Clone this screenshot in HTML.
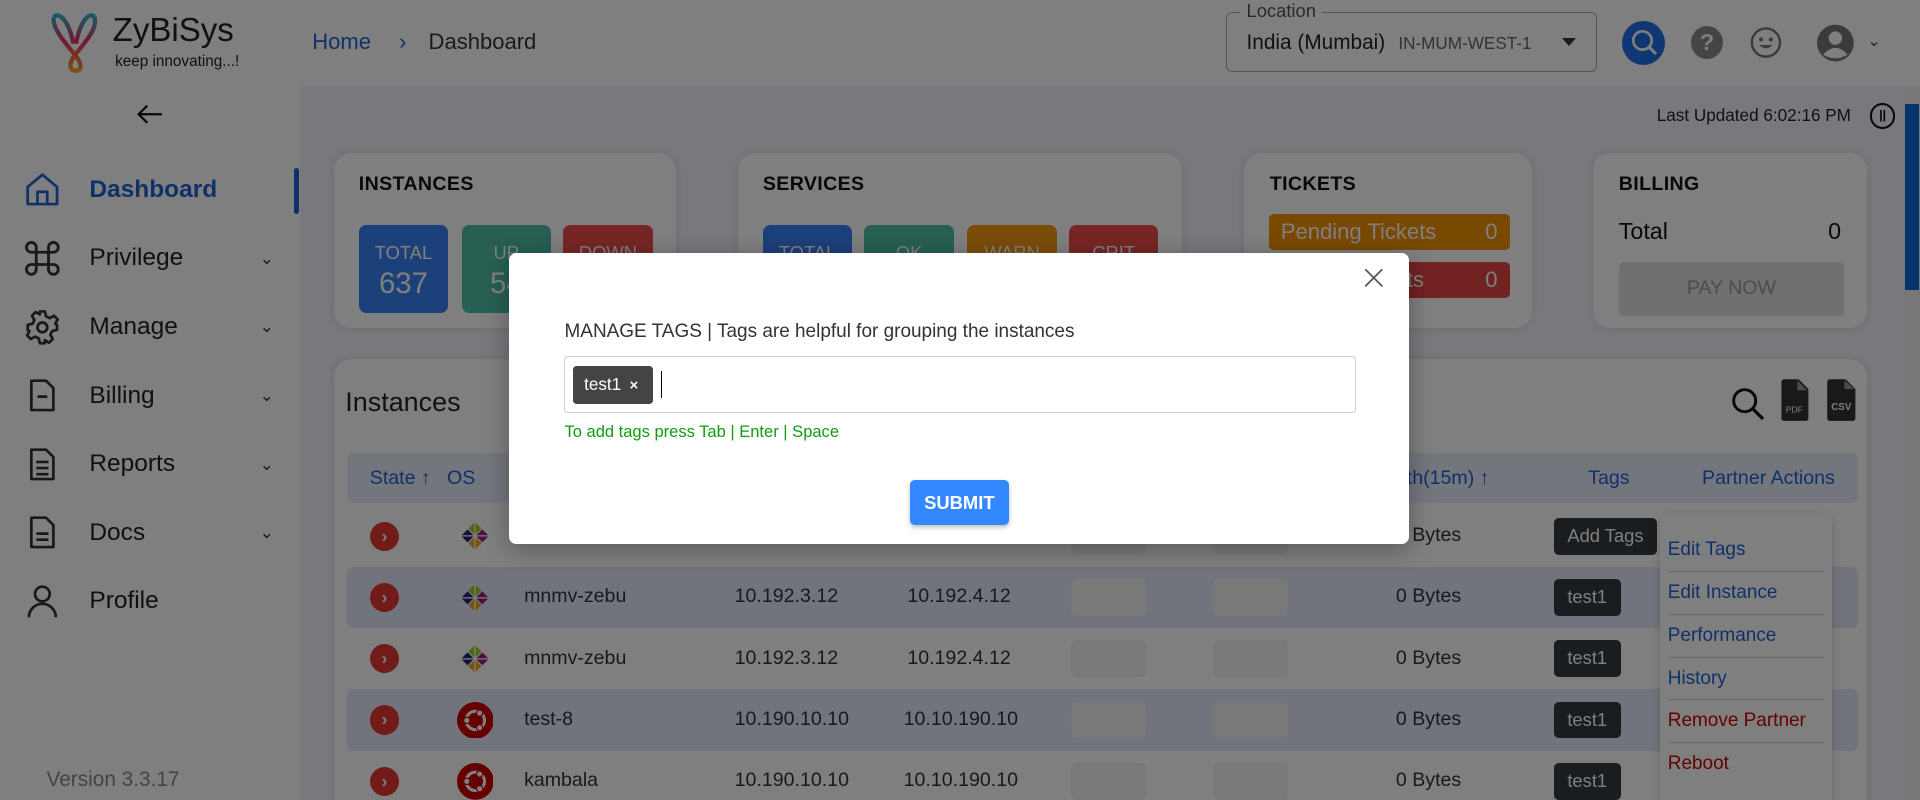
<!DOCTYPE html>
<html><head><meta charset="utf-8"><style>
*{box-sizing:border-box;margin:0;padding:0}
html,body{width:1920px;height:800px;overflow:hidden}
body{font-family:"Liberation Sans",sans-serif;background:#fff}
#root{zoom:1.22449;width:1568px;height:653.3px;position:relative;overflow:hidden;background:#fff}
.a{position:absolute}
.main{left:245px;top:70px;width:1323px;height:600px;background:#eef2f8}
.card{background:#fff;border-radius:14px;box-shadow:0 0 6px rgba(120,140,180,.25)}
.ct{font-size:16px;font-weight:bold;color:#111;letter-spacing:.3px}
.box{width:73px;height:72px;border-radius:6px;color:#fff;text-align:center}
.box b{display:block;font-size:15px;margin-top:14px;font-weight:normal}
.box i{display:block;font-style:normal;font-size:24px;margin-top:2px}
.mi{left:20px;font-size:20px;color:#222;display:flex;align-items:center}
.mi svg{width:30px;height:30px;margin-right:23px}
.chev{position:absolute;left:192px;font-size:14px;color:#333}
.row{left:283px;width:1234px;height:50px}
.rc{position:absolute;left:19px;top:13px;width:24px;height:24px;border-radius:50%;background:#e53935;color:#fff;font-size:14px;text-align:center;line-height:24px;font-weight:bold}
.t{position:absolute;top:15px;font-size:16px;color:#333}
.ph{position:absolute;top:10px;width:61px;height:30px;border-radius:5px;background:#f2f2f2}
.tag{position:absolute;left:986px;top:10px;height:30px;padding:0 11px;border-radius:4px;background:#343a40;color:#fff;font-size:15px;line-height:30px}
.dd{font-size:15.5px;padding:0 0;height:35px;line-height:35px;border-bottom:1px solid #ccc}
.os{position:absolute;left:92px;top:12px}
</style></head><body><div id="root">
<svg width="0" height="0" style="position:absolute"><defs>
<symbol id="cent" viewBox="0 0 26 26"><g transform="rotate(45 13 13)"><rect x="5" y="5" width="7.5" height="7.5" fill="#9ccd2a"/><rect x="13.5" y="5" width="7.5" height="7.5" fill="#932279"/><rect x="5" y="13.5" width="7.5" height="7.5" fill="#262577"/><rect x="13.5" y="13.5" width="7.5" height="7.5" fill="#efa724"/></g><path d="M13 1v24M1 13h24" stroke="#fff" stroke-width="1"/></symbol>
<symbol id="ubu" viewBox="0 0 30 30"><circle cx="15" cy="15" r="15" fill="#c00"/><circle cx="15" cy="15" r="7.5" fill="none" stroke="#fff" stroke-width="2.5"/><circle cx="8" cy="15" r="2.6" fill="#fff" stroke="#c00"/><circle cx="18.5" cy="9" r="2.6" fill="#fff" stroke="#c00"/><circle cx="18.5" cy="21" r="2.6" fill="#fff" stroke="#c00"/></symbol>
</defs></svg>
<!-- header -->
<div class="a" style="left:40px;top:10px">
<svg width="42" height="50" viewBox="0 0 42 50"><defs><linearGradient id="g" x1="0" y1="0" x2="0" y2="1"><stop offset="0" stop-color="#2bb5c8"/><stop offset=".45" stop-color="#e0306a"/><stop offset="1" stop-color="#f2a020"/></linearGradient></defs><path d="M4 4 C2 12 12 24 22 36 C28 44 26 48 22 48 C17 48 15 43 22 34 C32 22 40 12 37 4 M4 4 C8 0 16 6 20 26 M37 4 C33 0 26 6 22 26" fill="none" stroke="url(#g)" stroke-width="3.5"/></svg>
</div>
<div class="a" style="left:92px;top:10px;font-size:27px;color:#222">ZyBiSys</div>
<div class="a" style="left:94px;top:43px;font-size:12.5px;color:#222">keep innovating...!</div>
<div class="a" style="left:255px;top:24px;font-size:18px;color:#1e63d1">Home <span style="margin:0 18px;color:#1e63d1">&#8250;</span><span style="color:#333">Dashboard</span></div>
<div class="a" style="left:1001px;top:10px;width:303px;height:49px;border:1px solid #aaa;border-radius:5px"></div>
<div class="a" style="left:1013px;top:0;background:#fff;padding:0 5px;font-size:15px;color:#555">Location</div>
<div class="a" style="left:1018px;top:25px;font-size:17px;color:#222">India (Mumbai) <span style="font-size:14px;color:#666;margin-left:6px">IN-MUM-WEST-1</span></div>
<div class="a" style="left:1276px;top:31px;border-left:6px solid transparent;border-right:6px solid transparent;border-top:7px solid #333"></div>
<div class="a" style="left:1325px;top:17px;width:35px;height:36px;border-radius:50%;background:#1e6fe8"></div>
<svg class="a" style="left:1330px;top:22px" width="26" height="26" viewBox="0 0 26 26"><circle cx="11" cy="11" r="7.5" fill="none" stroke="#fff" stroke-width="2.2"/><path d="M16.5 16.5 L22 22" stroke="#fff" stroke-width="2.5"/></svg>
<div class="a" style="left:1381px;top:21px;width:26px;height:27px;border-radius:50%;background:#8a8a8a;color:#fff;font-weight:bold;font-size:19px;text-align:center;line-height:27px">?</div>
<svg class="a" style="left:1429px;top:21px" width="26" height="27" viewBox="0 0 26 27"><circle cx="13" cy="13.5" r="11.5" fill="none" stroke="#777" stroke-width="2"/><circle cx="9" cy="11" r="1.7" fill="#777"/><circle cx="17" cy="11" r="1.7" fill="#777"/><path d="M7.5 15.5 Q13 21 18.5 15.5Z" fill="#777"/></svg>
<svg class="a" style="left:1484px;top:20px" width="30" height="31" viewBox="0 0 30 31"><circle cx="15" cy="15.5" r="15" fill="#777"/><circle cx="15" cy="11.5" r="5.5" fill="#fff"/><path d="M5 25 Q15 14 25 25 Q15 31 5 25Z" fill="#fff"/></svg>
<div class="a" style="left:1525px;top:25px;font-size:13px;color:#444">&#8964;</div>
<!-- sidebar -->
<svg class="a" style="left:110px;top:83px" width="24" height="20" viewBox="0 0 24 20"><path d="M22 10H3M10 3L3 10l7 7" fill="none" stroke="#111" stroke-width="1.8"/></svg>
<div class="a" style="left:240px;top:137px;width:4px;height:38px;background:#1e63d1;border-radius:2px"></div>
<div class="a mi" style="top:140px;color:#1e63d1;font-weight:bold"><svg viewBox="0 0 30 30"><path d="M3 13L15 3l12 10v14H3Z M11 27V17h8v10" fill="none" stroke="#1e63d1" stroke-width="2.2" stroke-linejoin="round"/></svg>Dashboard</div>
<div class="a mi" style="top:196px"><svg viewBox="0 0 30 30"><path d="M10 10h10v10H10Z M10 10V6a4 4 0 1 0-4 4h4 M20 10V6a4 4 0 1 1 4 4h-4 M10 20v4a4 4 0 1 1-4-4h4 M20 20v4a4 4 0 1 0 4-4h-4" fill="none" stroke="#333" stroke-width="2.3"/></svg>Privilege<span class="chev">&#8964;</span></div>
<div class="a mi" style="top:252px"><svg viewBox="0 0 30 30"><circle cx="15" cy="15" r="4" fill="none" stroke="#333" stroke-width="2.2"/><path d="M13 2h4l1 4 3 1.5 3.5-2 3 3-2 3.5L27 13v4l-4 1-1.5 3 2 3.5-3 3-3.5-2L17 28h-4l-1-4-3-1.5-3.5 2-3-3 2-3.5L3 17v-4l4-1 1.5-3-2-3.5 3-3 3.5 2Z" fill="none" stroke="#333" stroke-width="2.2" stroke-linejoin="round"/></svg>Manage<span class="chev">&#8964;</span></div>
<div class="a mi" style="top:308px"><svg viewBox="0 0 30 30"><path d="M6 3h12l6 6v18H6Z M11 16h8" fill="none" stroke="#333" stroke-width="2.2" stroke-linejoin="round"/></svg>Billing<span class="chev">&#8964;</span></div>
<div class="a mi" style="top:364px"><svg viewBox="0 0 30 30"><path d="M6 3h12l6 6v18H6Z M10 13h10M10 18h10M10 23h10" fill="none" stroke="#333" stroke-width="2.2" stroke-linejoin="round"/></svg>Reports<span class="chev">&#8964;</span></div>
<div class="a mi" style="top:420px"><svg viewBox="0 0 30 30"><path d="M6 3h12l6 6v18H6Z M10 16h10M10 21h10" fill="none" stroke="#333" stroke-width="2.2" stroke-linejoin="round"/></svg>Docs<span class="chev">&#8964;</span></div>
<div class="a mi" style="top:476px"><svg viewBox="0 0 30 30"><circle cx="15" cy="9" r="6" fill="none" stroke="#333" stroke-width="2.2"/><path d="M4 28a11 11 0 0 1 22 0" fill="none" stroke="#333" stroke-width="2.2"/></svg>Profile</div>
<div class="a" style="left:38px;top:627px;font-size:17px;color:#888">Version 3.3.17</div>
<!-- main -->
<div class="a main"></div>
<div class="a" style="left:1555px;top:70px;width:13px;height:600px;background:#f0f0f0"></div>
<div class="a" style="left:1556px;top:85px;width:11px;height:152px;background:#0a66d8"></div>
<div class="a" style="left:1353px;top:86px;font-size:14px;color:#222">Last Updated 6:02:16 PM</div>
<div class="a" style="left:1527px;top:84px;width:21px;height:21px;border:2px solid #111;border-radius:50%;font-size:10px;text-align:center;line-height:17px;font-weight:bold">||</div>
<div class="a card" style="left:273px;top:125px;width:279px;height:143px"></div>
<div class="a ct" style="left:293px;top:141px">INSTANCES</div>
<div class="a box" style="left:293px;top:184px;background:#3881f5"><b>TOTAL</b><i>637</i></div>
<div class="a box" style="left:377px;top:184px;background:#4fbfa6"><b>UP</b><i>54</i></div>
<div class="a box" style="left:460px;top:184px;background:#ef4d4d"><b>DOWN</b><i>93</i></div>
<div class="a card" style="left:603px;top:125px;width:362px;height:143px"></div>
<div class="a ct" style="left:623px;top:141px">SERVICES</div>
<div class="a box" style="left:623px;top:184px;background:#3881f5"><b>TOTAL</b><i>0</i></div>
<div class="a box" style="left:706px;top:184px;background:#4fbfa6"><b>OK</b><i>0</i></div>
<div class="a box" style="left:790px;top:184px;background:#f59a14"><b>WARN</b><i>0</i></div>
<div class="a box" style="left:873px;top:184px;background:#ef4d4d"><b>CRIT</b><i>0</i></div>
<div class="a card" style="left:1016px;top:125px;width:235px;height:143px"></div>
<div class="a ct" style="left:1037px;top:141px">TICKETS</div>
<div class="a" style="left:1036px;top:175px;width:197px;height:29px;border-radius:4px;background:#f59200;color:#fff;font-size:18px;line-height:29px;padding:0 10px"><b style="font-weight:normal">Pending Tickets</b><span style="float:right">0</span></div>
<div class="a" style="left:1036px;top:214px;width:197px;height:29px;border-radius:4px;background:#e74545;color:#fff;font-size:18px;line-height:29px;padding:0 10px">Closed Tickets<span style="float:right">0</span></div>
<div class="a card" style="left:1301px;top:125px;width:224px;height:143px"></div>
<div class="a ct" style="left:1322px;top:141px">BILLING</div>
<div class="a" style="left:1322px;top:178px;font-size:19px;color:#111">Total</div>
<div class="a" style="left:1493px;top:178px;font-size:19px;color:#111">0</div>
<div class="a" style="left:1322px;top:214px;width:184px;height:44px;border-radius:4px;background:#e0e0e0;color:#999;font-size:16px;text-align:center;line-height:44px">PAY NOW</div>
<div class="a card" style="left:273px;top:293px;width:1252px;height:380px"></div>
<div class="a" style="left:282px;top:316px;font-size:22px;color:#222">Instances</div>
<svg class="a" style="left:1413px;top:315px" width="30" height="30" viewBox="0 0 30 30"><circle cx="12" cy="12" r="9" fill="none" stroke="#111" stroke-width="2.4"/><path d="M18.5 18.5L27 27" stroke="#111" stroke-width="2.6"/></svg>
<svg class="a" style="left:1453px;top:309px" width="25" height="36" viewBox="0 0 25 36"><path d="M2 3a2 2 0 0 1 2-2h12l8 8v24a2 2 0 0 1-2 2H4a2 2 0 0 1-2-2Z" fill="#333"/><path d="M15 2v8h8" fill="#999"/><text x="12.5" y="28" font-size="7" fill="#fff" text-anchor="middle" font-family="Liberation Sans">PDF</text></svg>
<svg class="a" style="left:1491px;top:309px" width="25" height="36" viewBox="0 0 25 36"><path d="M1 3a2 2 0 0 1 2-2h13l8 8v24a2 2 0 0 1-2 2H3a2 2 0 0 1-2-2Z" fill="#333"/><path d="M15 2v7h8" fill="#999"/><text x="12.5" y="26" font-size="8" font-weight="bold" fill="#fff" text-anchor="middle" font-family="Liberation Sans">CSV</text></svg>
<div class="a" style="left:283px;top:370px;width:1234px;height:41px;background:#e6edfa;border-radius:5px"></div>
<div class="a" style="left:302px;top:381px;font-size:16px;color:#1e63d1">State &#8593;&nbsp;&nbsp;&nbsp;OS</div>
<div class="a" style="left:1140px;top:381px;font-size:16px;color:#1e63d1">dth(15m) &#8593;</div>
<div class="a" style="left:1297px;top:381px;font-size:16px;color:#1e63d1">Tags</div>
<div class="a" style="left:1390px;top:381px;font-size:16px;color:#1e63d1">Partner Actions</div>
<!-- rows -->
<div class="a row" style="top:413px"><div class="rc">&#8250;</div><svg class="os" width="26" height="26"><use href="#cent"/></svg><div class="t" style="left:145px">mnmv-zebu</div><div class="t" style="left:317px">10.192.3.12</div><div class="t" style="left:458px">10.192.4.12</div><div class="ph" style="left:592px"></div><div class="ph" style="left:708px"></div><div class="t" style="left:857px">0 Bytes</div><div class="tag">Add Tags</div></div>
<div class="a row" style="top:463px;background:#e2e9f8;border-radius:5px"><div class="rc">&#8250;</div><svg class="os" width="26" height="26"><use href="#cent"/></svg><div class="t" style="left:145px">mnmv-zebu</div><div class="t" style="left:317px">10.192.3.12</div><div class="t" style="left:458px">10.192.4.12</div><div class="ph" style="left:592px"></div><div class="ph" style="left:708px"></div><div class="t" style="left:857px">0 Bytes</div><div class="tag">test1</div></div>
<div class="a row" style="top:513px"><div class="rc">&#8250;</div><svg class="os" width="26" height="26"><use href="#cent"/></svg><div class="t" style="left:145px">mnmv-zebu</div><div class="t" style="left:317px">10.192.3.12</div><div class="t" style="left:458px">10.192.4.12</div><div class="ph" style="left:592px"></div><div class="ph" style="left:708px"></div><div class="t" style="left:857px">0 Bytes</div><div class="tag">test1</div></div>
<div class="a row" style="top:563px;background:#e2e9f8;border-radius:5px"><div class="rc">&#8250;</div><svg class="os" style="left:90px;top:10px" width="30" height="30"><use href="#ubu"/></svg><div class="t" style="left:145px">test-8</div><div class="t" style="left:317px">10.190.10.10</div><div class="t" style="left:455px">10.10.190.10</div><div class="ph" style="left:592px"></div><div class="ph" style="left:708px"></div><div class="t" style="left:857px">0 Bytes</div><div class="tag">test1</div></div>
<div class="a row" style="top:613px"><div class="rc">&#8250;</div><svg class="os" style="left:90px;top:10px" width="30" height="30"><use href="#ubu"/></svg><div class="t" style="left:145px">kambala</div><div class="t" style="left:317px">10.190.10.10</div><div class="t" style="left:455px">10.10.190.10</div><div class="ph" style="left:592px"></div><div class="ph" style="left:708px"></div><div class="t" style="left:857px">0 Bytes</div><div class="tag">test1</div></div>
<!-- dropdown -->
<div class="a" style="left:1356px;top:420px;width:140px;height:240px;background:#fff;border-radius:8px;box-shadow:0 2px 8px rgba(0,0,0,.2);padding:12px 6px 0"><div class="dd" style="color:#1e63d1">Edit Tags</div><div class="dd" style="color:#1e63d1">Edit Instance</div><div class="dd" style="color:#1e63d1">Performance</div><div class="dd" style="color:#1e63d1">History</div><div class="dd" style="color:#c00">Remove Partner</div><div class="dd" style="color:#c00;border:0">Reboot</div></div>
<!-- overlay -->
<div class="a" style="left:0;top:0;width:1568px;height:660px;background:rgba(0,0,0,.5)"></div>
<!-- modal -->
<div class="a" style="left:416px;top:207px;width:735px;height:237px;background:#fff;border-radius:6px;box-shadow:0 4px 20px rgba(0,0,0,.3)"></div>
<svg class="a" style="left:1114px;top:219px" width="16" height="16" viewBox="0 0 16 16"><path d="M1 1L15 15M15 1L1 15" stroke="#555" stroke-width="1.4"/></svg>
<div class="a" style="left:461px;top:262px;font-size:15.5px;color:#333">MANAGE TAGS&nbsp;| Tags are helpful for grouping the instances</div>
<div class="a" style="left:461px;top:291px;width:646px;height:46px;border:1px solid #ccc;border-radius:3px"></div>
<div class="a" style="left:468px;top:299px;width:65px;height:31px;background:#444;border-radius:3px;color:#fff;font-size:14px;line-height:31px;padding-left:9px">test1 <b style="font-size:12px;margin-left:3px">&#215;</b></div>
<div class="a" style="left:540px;top:303px;width:1px;height:22px;background:#000"></div>
<div class="a" style="left:461px;top:345px;font-size:13.5px;color:#129a12">To add tags press Tab | Enter | Space</div>
<div class="a" style="left:743px;top:392px;width:81px;height:37px;background:#3388ff;border-radius:4px;color:#fff;font-weight:bold;font-size:15px;text-align:center;line-height:37px;box-shadow:0 2px 4px rgba(0,0,0,.25)">SUBMIT</div>
</div></body></html>
